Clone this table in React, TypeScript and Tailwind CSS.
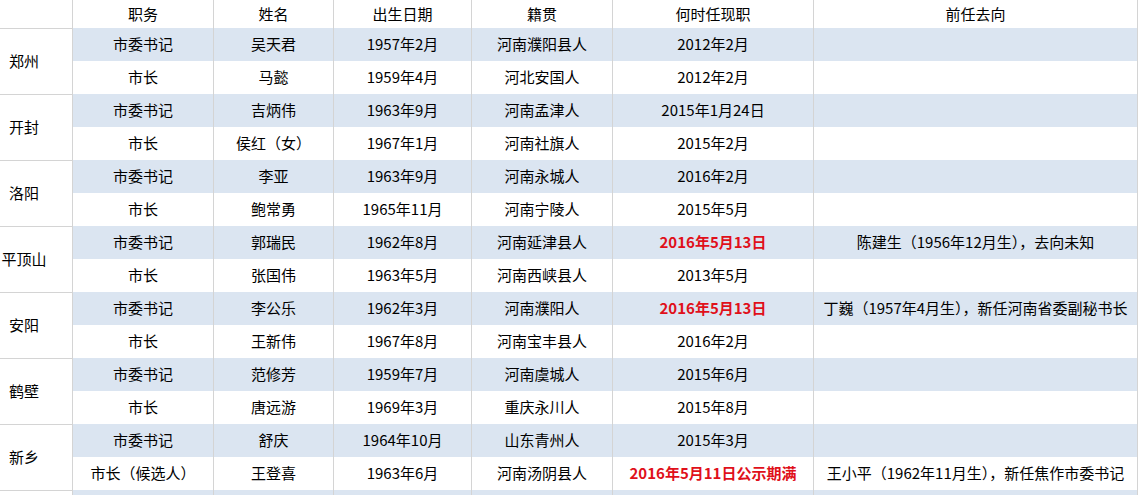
import React from "react";

type Row = {
  role: string;
  name: string;
  born: string;
  origin: string;
  since: string;
  sinceHot?: boolean;
  prev?: string;
};

const CITIES: Array<[string, Row, Row]> = [
  [
    "郑州",
    { role: "市委书记", name: "吴天君", born: "1957年2月", origin: "河南濮阳县人", since: "2012年2月" },
    { role: "市长", name: "马懿", born: "1959年4月", origin: "河北安国人", since: "2012年2月" },
  ],
  [
    "开封",
    { role: "市委书记", name: "吉炳伟", born: "1963年9月", origin: "河南孟津人", since: "2015年1月24日" },
    { role: "市长", name: "侯红（女）", born: "1967年1月", origin: "河南社旗人", since: "2015年2月" },
  ],
  [
    "洛阳",
    { role: "市委书记", name: "李亚", born: "1963年9月", origin: "河南永城人", since: "2016年2月" },
    { role: "市长", name: "鲍常勇", born: "1965年11月", origin: "河南宁陵人", since: "2015年5月" },
  ],
  [
    "平顶山",
    {
      role: "市委书记",
      name: "郭瑞民",
      born: "1962年8月",
      origin: "河南延津县人",
      since: "2016年5月13日",
      sinceHot: true,
      prev: "陈建生（1956年12月生），去向未知",
    },
    { role: "市长", name: "张国伟", born: "1963年5月", origin: "河南西峡县人", since: "2013年5月" },
  ],
  [
    "安阳",
    {
      role: "市委书记",
      name: "李公乐",
      born: "1962年3月",
      origin: "河南濮阳人",
      since: "2016年5月13日",
      sinceHot: true,
      prev: "丁巍（1957年4月生），新任河南省委副秘书长",
    },
    { role: "市长", name: "王新伟", born: "1967年8月", origin: "河南宝丰县人", since: "2016年2月" },
  ],
  [
    "鹤壁",
    { role: "市委书记", name: "范修芳", born: "1959年7月", origin: "河南虞城人", since: "2015年6月" },
    { role: "市长", name: "唐远游", born: "1969年3月", origin: "重庆永川人", since: "2015年8月" },
  ],
  [
    "新乡",
    { role: "市委书记", name: "舒庆", born: "1964年10月", origin: "山东青州人", since: "2015年3月" },
    {
      role: "市长（候选人）",
      name: "王登喜",
      born: "1963年6月",
      origin: "河南汤阴县人",
      since: "2016年5月11日公示期满",
      sinceHot: true,
      prev: "王小平（1962年11月生），新任焦作市委书记",
    },
  ],
];

const HEAD = ["职务", "姓名", "出生日期", "籍贯", "何时任现职", "前任去向"];
const WIDTHS = ["w-[73px]", "w-[141px]", "w-[120px]", "w-[138px]", "w-[141px]", "w-[201px]", "w-[324px]"];

const cell = "border-r border-[#d4d4d4] p-0 text-center align-middle whitespace-nowrap";

function DataCells({ r, blue }: { r: Row; blue: boolean }) {
  const bg = blue ? "bg-[#dbe5f1]" : "bg-white";
  return (
    <>
      <td className={`${cell} ${bg}`}>{r.role}</td>
      <td className={`${cell} ${bg}`}>{r.name}</td>
      <td className={`${cell} ${bg}`}>{r.born}</td>
      <td className={`${cell} ${bg}`}>{r.origin}</td>
      <td className={`${cell} ${bg} ${r.sinceHot ? "font-bold text-[#e0101a]" : ""}`}>{r.since}</td>
      <td className={`${cell} ${bg}`}>{r.prev ?? ""}</td>
    </>
  );
}

export default function App() {
  return (
    <div
      className="h-[495px] w-[1141px] overflow-hidden bg-white text-[15px] text-black"
      style={{ fontFamily: '"Noto Sans CJK SC", "Liberation Sans", sans-serif' }}
    >
      <table className="table-fixed border-separate border-spacing-0 w-[1138px]">
        <colgroup>
          {WIDTHS.map((w) => (
            <col key={w} className={w} />
          ))}
        </colgroup>
        <thead>
          <tr className="h-[28px]">
            <th className={`${cell} font-normal`} />
            {HEAD.map((h) => (
              <th key={h} className={`${cell} font-normal`}>
                {h}
              </th>
            ))}
          </tr>
        </thead>
        <tbody>
          {CITIES.map(([city, sec, mayor]) => (
            <React.Fragment key={city}>
              <tr className="h-[33px]">
                <td rowSpan={2} className={`${cell} border-t bg-white`}>
                  <div className="w-[48px] text-center">{city}</div>
                </td>
                <DataCells r={sec} blue />
              </tr>
              <tr className="h-[33px]">
                <DataCells r={mayor} blue={false} />
              </tr>
            </React.Fragment>
          ))}
          <tr className="h-[33px]">
            <td className={`${cell} border-t bg-white`} />
            {HEAD.map((h) => (
              <td key={h} className={`${cell} bg-[#dbe5f1]`} />
            ))}
          </tr>
        </tbody>
      </table>
    </div>
  );
}
